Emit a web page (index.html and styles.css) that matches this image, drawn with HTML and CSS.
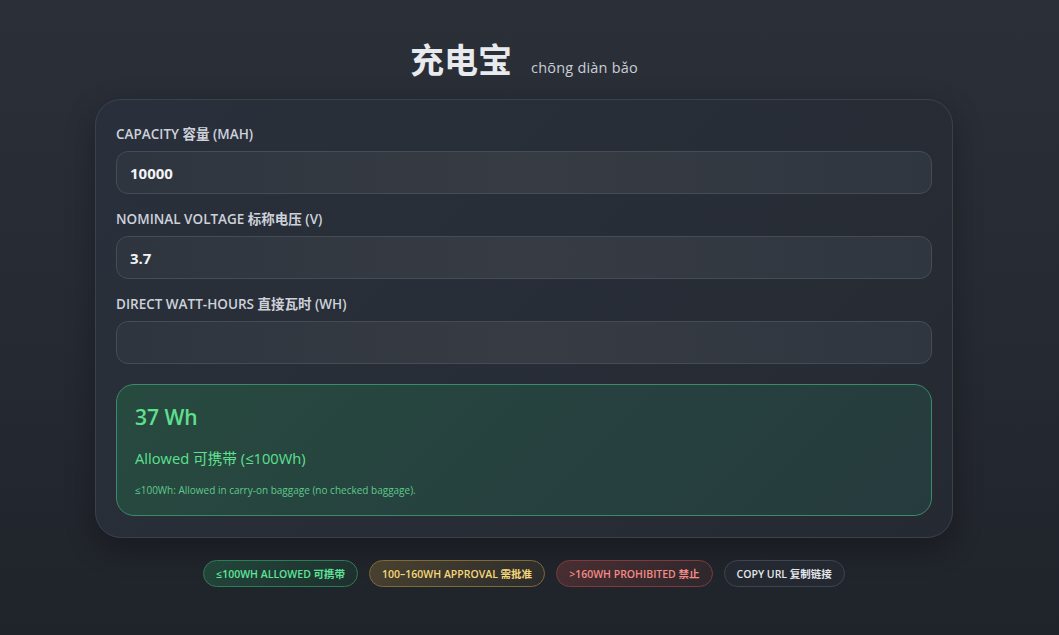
FILE: index.html
```html
<!DOCTYPE html>
<html lang="zh">
<head>
<meta charset="utf-8">
<title>充电宝</title>
<link rel="stylesheet" href="styles.css">
</head>
<body>
<main class="page">
  <header class="title">
    <h1 class="hanzi">充电宝</h1>
    <span class="pinyin">chōng diàn bǎo</span>
  </header>
  <section class="card">
    <div class="field">
      <label class="label">Capacity 容量 (mAh)</label>
      <div class="input">10000</div>
    </div>
    <div class="field">
      <label class="label">Nominal Voltage 标称电压 (V)</label>
      <div class="input">3.7</div>
    </div>
    <div class="field">
      <label class="label">Direct Watt-hours 直接瓦时 (Wh)</label>
      <div class="input"></div>
    </div>
    <div class="result">
      <div class="wh">37 Wh</div>
      <div class="status">Allowed 可携带 (≤100Wh)</div>
      <div class="note">≤100Wh: Allowed in carry-on baggage (no checked baggage).</div>
    </div>
  </section>
  <nav class="pills">
    <span class="pill green">≤100Wh Allowed 可携带</span>
    <span class="pill amber">100–160Wh Approval 需批准</span>
    <span class="pill red">&gt;160Wh Prohibited 禁止</span>
    <span class="pill plain">Copy URL 复制链接</span>
  </nav>
</main>
</body>
</html>
```

FILE: styles.css
```css
* { box-sizing: border-box; }
html, body { margin: 0; height: 100%; }
body {
  background: linear-gradient(180deg, #2b2f38 0%, #262a32 50%, #1f232a 100%);
  font-family: "Open Sans", "Noto Sans CJK SC", sans-serif;
  color: #e5e7eb;
  padding-right: 11px;
}
.page {
  width: 858px;
  margin: 0 auto;
  padding-top: 36px;
  display: flex;
  flex-direction: column;
  align-items: stretch;
}
.title {
  display: flex;
  justify-content: center;
  align-items: baseline;
  gap: 19px;
  height: 63px;
}
.hanzi {
  margin: 0;
  font-family: "Noto Sans CJK SC", sans-serif;
  font-size: 34px;
  font-weight: 700;
  color: #e8eaee;
  line-height: 46px;
}
.pinyin {
  font-size: 14.5px;
  color: #c9ced6;
  letter-spacing: 0.2px;
}
.card {
  border: 1px solid #3b414b;
  border-radius: 26px;
  background: linear-gradient(135deg, #2a303b 0%, #252a32 100%);
  box-shadow: 0 10px 30px rgba(0,0,0,0.3);
  padding: 25px 20px 21px;
  display: flex;
  flex-direction: column;
}
.field {
  display: flex;
  flex-direction: column;
  gap: 7px;
  margin-bottom: 16px;
}
.label {
  font-size: 13.5px;
  font-weight: 600;
  text-transform: uppercase;
  color: #cdd2da;
  line-height: 19px;
}
.input {
  height: 43px;
  border: 1px solid #464c56;
  border-radius: 12px;
  background: linear-gradient(90deg, #2f353e 0%, #363b44 50%, #30363f 100%);
  padding: 0 13px;
  display: flex;
  align-items: center;
  font-size: 15px;
  font-weight: 700;
  color: #f1f3f6;
}
.result {
  margin-top: 4px;
  border: 1px solid #3b8a69;
  border-radius: 18px;
  background: linear-gradient(135deg, #274a3f 0%, #26403f 60%, #263b3d 100%);
  padding: 18px 18px 18px;
  display: flex;
  flex-direction: column;
}
.wh {
  font-size: 21px;
  font-weight: 600;
  color: #5ee08f;
  line-height: 28px;
}
.status {
  margin-top: 17px;
  font-size: 14.7px;
  color: #5ee08f;
  line-height: 20px;
}
.note {
  margin-top: 15px;
  font-size: 10px;
  color: #5ec98c;
  line-height: 14px;
}
.pills {
  margin-top: 22px;
  display: flex;
  justify-content: center;
  gap: 11px;
}
.pill {
  height: 27px;
  padding: 0 12px;
  border-radius: 14px;
  display: inline-flex;
  align-items: center;
  font-size: 10.5px;
  font-weight: 600;
  text-transform: uppercase;
  border: 1px solid;
}
.green {
  color: #5fe39a;
  border-color: #2f7a58;
  background: linear-gradient(135deg, #22463a, #1e2f2d);
}
.amber {
  color: #f5d77a;
  border-color: #7d6a3a;
  background: linear-gradient(135deg, #4a4230, #2b2b2c);
}
.red {
  color: #f48a85;
  border-color: #7a3c3e;
  background: linear-gradient(135deg, #4a2e32, #2d272c);
}
.plain {
  color: #e3e6eb;
  border-color: #3f4550;
  background: #242830;
}
```
